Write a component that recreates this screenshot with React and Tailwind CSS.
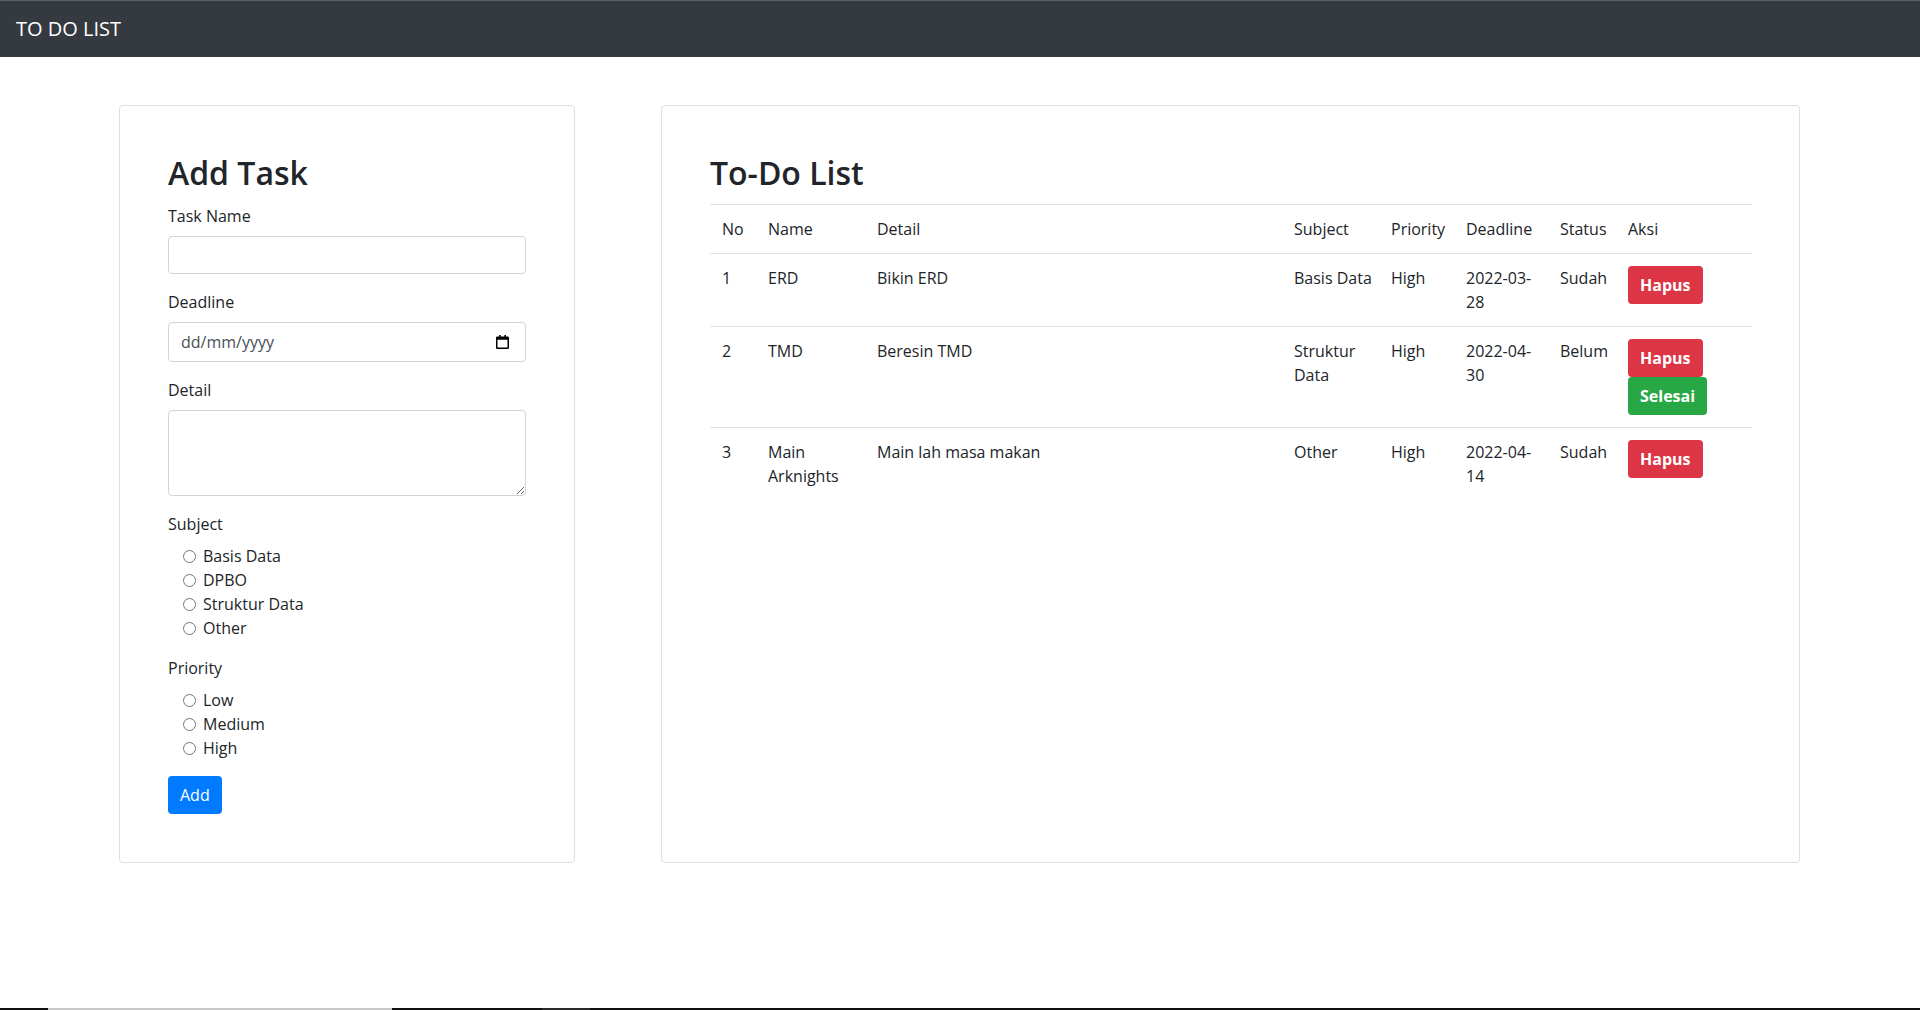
import { useState } from "react";

const tasks = [
  { no: 1, name: "ERD", detail: "Bikin ERD", subject: "Basis Data", priority: "High", deadline: "2022-03-28", status: "Sudah" },
  { no: 2, name: "TMD", detail: "Beresin TMD", subject: "Struktur Data", priority: "High", deadline: "2022-04-30", status: "Belum" },
  { no: 3, name: "Main Arknights", detail: "Main lah masa makan", subject: "Other", priority: "High", deadline: "2022-04-14", status: "Sudah" },
];

const subjects = ["Basis Data", "DPBO", "Struktur Data", "Other"];
const priorities = ["Low", "Medium", "High"];

function CalendarIcon() {
  return (
    <svg width="13" height="14" viewBox="0 0 13 14" className="text-black">
      <rect x="3" y="0" width="1.6" height="2.5" fill="currentColor" />
      <rect x="8.4" y="0" width="1.6" height="2.5" fill="currentColor" />
      <rect x="0.75" y="2.25" width="11.5" height="11" rx="0.6" fill="none" stroke="currentColor" strokeWidth="1.5" />
      <rect x="0.75" y="2.25" width="11.5" height="2.5" fill="currentColor" />
    </svg>
  );
}

function RadioGroup({ name, options }) {
  const [value, setValue] = useState("");
  return (
    <div className="mb-4">
      {options.map((option) => (
        <label key={option} className="flex h-6 items-center pl-[15px] leading-6">
          <input type="radio" name={name} checked={value === option} onChange={() => setValue(option)} className="m-0 h-[13px] w-[13px]" />
          <span className="ml-[7px]">{option}</span>
        </label>
      ))}
    </div>
  );
}

function AddTask() {
  return (
    <section className="w-[456px] shrink-0 rounded border border-[#dfdfdf] p-12">
      <h2 className="mb-3 text-[32px] font-semibold leading-[38px]">Add Task</h2>
      <div className="mb-4">
        <label className="mb-2 block leading-6">Task Name</label>
        <input type="text" className="block h-[38px] w-full rounded border border-[#ced4da] px-3 text-[#495057] outline-none" />
      </div>
      <div className="mb-4">
        <label className="mb-2 block leading-6">Deadline</label>
        <div className="flex h-[40px] w-full items-center rounded border border-[#ced4da] pl-3 pr-4 text-[#495057]">
          <span>dd/mm/yyyy</span>
          <span className="ml-auto flex"><CalendarIcon /></span>
        </div>
      </div>
      <div className="mb-4">
        <label className="mb-2 block leading-6">Detail</label>
        <textarea rows={3} className="block h-[86px] w-full rounded border border-[#ced4da] px-3 py-1.5 outline-none" />
      </div>
      <label className="mb-2 block leading-6">Subject</label>
      <RadioGroup name="subject" options={subjects} />
      <label className="mb-2 block leading-6">Priority</label>
      <RadioGroup name="priority" options={priorities} />
      <button className="h-[38px] rounded bg-[#007bff] px-3 leading-6 text-white">Add</button>
    </section>
  );
}

function TodoList() {
  const cell = "border-t border-[#dee2e6] p-3 text-left align-top font-normal leading-6";
  const subjectCell = "border-t border-[#dee2e6] py-3 pl-3 pr-1 text-left align-top font-normal leading-6";
  const headers = ["No", "Name", "Detail", "Subject", "Priority", "Deadline", "Status", "Aksi"];
  return (
    <section className="ml-[86px] w-[1139px] shrink-0 rounded border border-[#dfdfdf] p-12">
      <h2 className="mb-3 text-[32px] font-semibold leading-[38px]">To-Do List</h2>
      <table className="w-full table-fixed border-collapse">
        <colgroup>
          <col className="w-[46px]" />
          <col className="w-[109px]" />
          <col className="w-[417px]" />
          <col className="w-[97px]" />
          <col className="w-[75px]" />
          <col className="w-[94px]" />
          <col className="w-[68px]" />
          <col className="w-[136px]" />
        </colgroup>
        <thead>
          <tr>
            {headers.map((h) => (
              <th key={h} className={h === "Subject" ? subjectCell : cell}>{h}</th>
            ))}
          </tr>
        </thead>
        <tbody>
          {tasks.map((task) => (
            <tr key={task.no}>
              <td className={cell}>{task.no}</td>
              <td className={cell}>{task.name}</td>
              <td className={cell}>{task.detail}</td>
              <td className={subjectCell}>{task.subject}</td>
              <td className={cell}>{task.priority}</td>
              <td className={cell}>{task.deadline}</td>
              <td className={cell}>{task.status}</td>
              <td className={cell}>
                <div className="flex flex-col items-start">
                  <button className="h-[38px] rounded bg-[#dc3545] px-3 font-bold leading-6 text-white">Hapus</button>
                  {task.status === "Belum" && (
                    <button className="h-[38px] rounded bg-[#28a745] px-3 font-bold leading-6 text-white">Selesai</button>
                  )}
                </div>
              </td>
            </tr>
          ))}
        </tbody>
      </table>
    </section>
  );
}

export default function App() {
  return (
    <div className="flex min-h-screen flex-col bg-white font-['Segoe_UI','Open_Sans',sans-serif] text-base text-[#212529]">
      <nav className="flex h-[57px] items-center border-t border-[#5d6166] bg-[#343a40] px-4">
        <span className="text-[20px] leading-[30px] text-white">TO DO LIST</span>
      </nav>
      <main className="mt-12 flex items-stretch pl-[119px]">
        <AddTask />
        <TodoList />
      </main>
      <div className="flex-1" />
      <div className="flex h-[2px]">
        <div className="w-[48px] bg-[#111]" />
        <div className="w-[344px] bg-[#c8c8c8]" />
        <div className="w-[150px] bg-[#111]" />
        <div className="w-[48px] bg-[#2a2a2a]" />
        <div className="flex-1 bg-[#111]" />
      </div>
    </div>
  );
}
